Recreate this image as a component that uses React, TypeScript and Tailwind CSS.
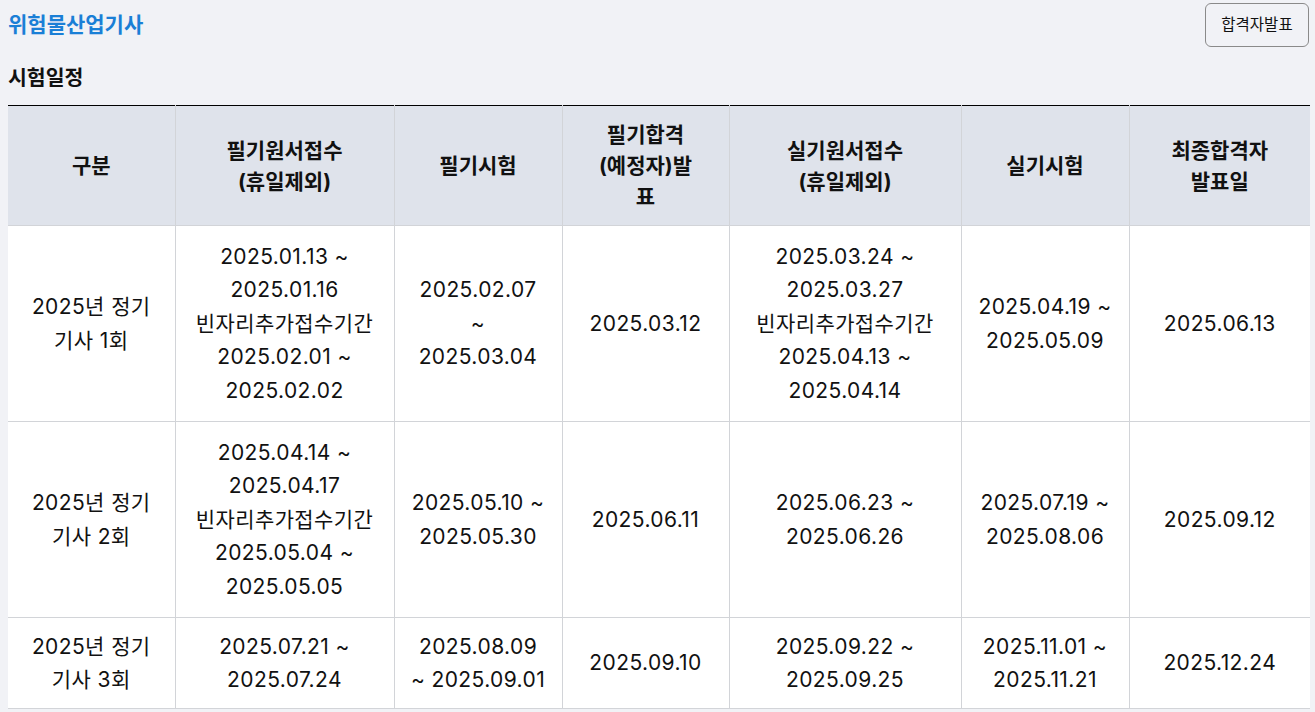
import React from "react";

const FONT = { fontFamily: 'Inter, "Noto Sans CJK KR", sans-serif' };

const headers: string[][] = [
  ["구분"],
  ["필기원서접수", "(휴일제외)"],
  ["필기시험"],
  ["필기합격", "(예정자)발", "표"],
  ["실기원서접수", "(휴일제외)"],
  ["실기시험"],
  ["최종합격자", "발표일"],
];

const rows: { h: string; cells: string[][] }[] = [
  {
    h: "h-[196px]",
    cells: [
      ["2025년 정기", "기사 1회"],
      ["2025.01.13 ~", "2025.01.16", "빈자리추가접수기간", "2025.02.01 ~", "2025.02.02"],
      ["2025.02.07", "~", "2025.03.04"],
      ["2025.03.12"],
      ["2025.03.24 ~", "2025.03.27", "빈자리추가접수기간", "2025.04.13 ~", "2025.04.14"],
      ["2025.04.19 ~", "2025.05.09"],
      ["2025.06.13"],
    ],
  },
  {
    h: "h-[196px]",
    cells: [
      ["2025년 정기", "기사 2회"],
      ["2025.04.14 ~", "2025.04.17", "빈자리추가접수기간", "2025.05.04 ~", "2025.05.05"],
      ["2025.05.10 ~", "2025.05.30"],
      ["2025.06.11"],
      ["2025.06.23 ~", "2025.06.26"],
      ["2025.07.19 ~", "2025.08.06"],
      ["2025.09.12"],
    ],
  },
  {
    h: "h-[91px]",
    cells: [
      ["2025년 정기", "기사 3회"],
      ["2025.07.21 ~", "2025.07.24"],
      ["2025.08.09", "~ 2025.09.01"],
      ["2025.09.10"],
      ["2025.09.22 ~", "2025.09.25"],
      ["2025.11.01 ~", "2025.11.21"],
      ["2025.12.24"],
    ],
  },
];

const widths = ["w-[167px]", "w-[219px]", "w-[168px]", "w-[167px]", "w-[232px]", "w-[168px]", "w-[181px]"];

export default function App() {
  return (
    <div className="min-h-[712px] bg-[#f1f2f6] pl-2 pr-[5px] text-[#111]" style={FONT}>
      <div className="flex items-start justify-between pt-[3px]">
        <h1 className="pt-[8px] text-[21px] font-bold leading-[28px] text-[#1a7fd6]">위험물산업기사</h1>
        <button className="mr-[1px] h-[44px] w-[104px] rounded-[6px] border border-[#8a8a8a] bg-[#f1f2f6] text-[15.5px] text-[#111]">
          합격자발표
        </button>
      </div>
      <h2 className="mt-[18px] text-[20.5px] font-bold leading-[26px] text-[#111]">시험일정</h2>
      <table className="mt-[14px] w-[1302px] table-fixed border-collapse border-t border-t-black">
        <colgroup>
          {widths.map((w, i) => (
            <col key={i} className={w} />
          ))}
        </colgroup>
        <thead>
          <tr className="h-[120px] bg-[#dfe3eb]">
            {headers.map((lines, i) => (
              <th
                key={i}
                className="border-x border-b border-[#d2d4d8] px-2 text-center align-middle text-[21px] font-bold leading-[31px] text-[#111] first:border-l-0 last:border-r-0"
              >
                {lines.map((l, j) => (
                  <div key={j}>{l}</div>
                ))}
              </th>
            ))}
          </tr>
        </thead>
        <tbody>
          {rows.map((r, ri) => (
            <tr key={ri} className={`${r.h} bg-white`}>
              {r.cells.map((lines, i) => (
                <td
                  key={i}
                  className="border border-[#d2d4d8] px-2 text-center align-middle text-[21px] leading-[33.5px] tracking-[0.4px] text-[#111] first:border-l-0 last:border-r-0"
                >
                  {lines.map((l, j) => (
                    <div key={j}>{l}</div>
                  ))}
                </td>
              ))}
            </tr>
          ))}
        </tbody>
      </table>
    </div>
  );
}
